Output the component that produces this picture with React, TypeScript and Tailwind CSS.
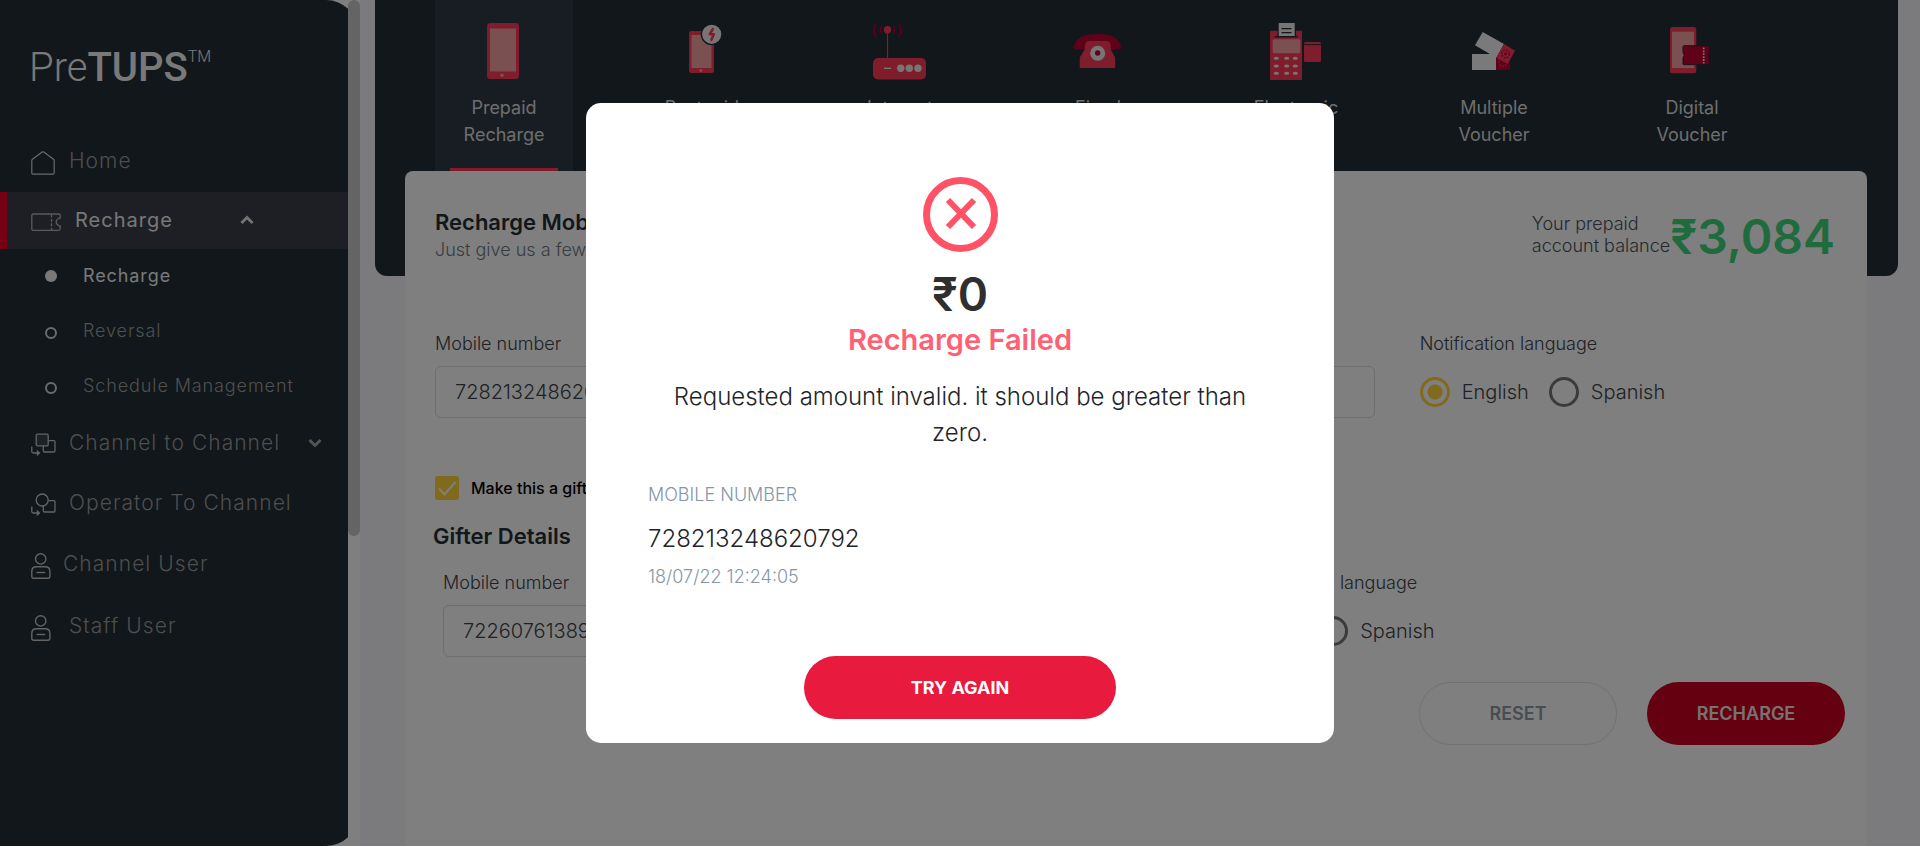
import type { ReactNode } from "react";

const RED = "#ff3a5a";
const DEEP = "#c00032";
const SKIN = "#f4a0a0";
const DARK = "#222e34";
const PALE = "#f0ece8";

function PrepaidIcon() {
  return (
    <svg viewBox="0 0 60 60" className="size-[60px]" aria-hidden="true">
      <rect x="13" y="3" width="32" height="56" rx="3.5" fill={RED} />
      <rect x="16" y="8.5" width="26" height="43" fill={SKIN} />
      <circle cx="28" cy="55.2" r="1.8" fill={SKIN} />
    </svg>
  );
}

function PostpaidIcon() {
  return (
    <svg viewBox="0 0 60 60" className="size-[60px]" aria-hidden="true">
      <rect x="17" y="11" width="25" height="42" rx="2.5" fill={RED} />
      <rect x="19.5" y="15" width="20" height="33" fill={SKIN} />
      <circle cx="28.8" cy="50.5" r="1.5" fill={SKIN} />
      <circle cx="39.7" cy="14.3" r="11" fill={DARK} />
      <circle cx="39.7" cy="14.3" r="9.6" fill={PALE} />
      <path d="M40.8 9.2 37.8 14.2h4l-2.4 5.6" fill="none" stroke={RED} strokeWidth="2.6" strokeLinecap="round" strokeLinejoin="round" />
    </svg>
  );
}

function InternetIcon() {
  return (
    <svg viewBox="0 0 60 60" className="size-[60px]" aria-hidden="true">
      <rect x="3" y="38" width="53" height="21.5" rx="5" fill={RED} />
      <path d="M17.5 10v29" stroke={RED} strokeWidth="1.2" />
      <circle cx="17.5" cy="9.7" r="3.7" fill={RED} />
      <path d="M12 5.5c-2 2.6-2 6 0 8.6M23 5.5c2 2.6 2 6 0 8.6M6.5 3.2c-3.4 4-3.4 10 0 14.2M28.5 3.2c3.4 4 3.4 10 0 14.2" fill="none" stroke={DEEP} strokeWidth="1.4" />
      <path d="M14 48.3h7" stroke={PALE} strokeWidth="1.4" />
      <circle cx="30.7" cy="48.3" r="3.7" fill={PALE} />
      <circle cx="39.3" cy="48.3" r="3.7" fill={PALE} />
      <circle cx="48" cy="48.3" r="3.7" fill={PALE} />
    </svg>
  );
}

function FixedLineIcon() {
  return (
    <svg viewBox="0 0 60 60" className="size-[60px]" aria-hidden="true">
      <path d="M6 28.2C6 18.5 15 14 29.5 14S53 18.5 53 28.2q0 1-1 1H40l-3-7H22l-3 7H7q-1 0-1-1z" fill={DEEP} />
      <path d="M21 21h17q4 0 4.5 4l.5 5 4.2 7.5V47q0 1-1 1H12.7q-1 0-1-1v-9.5L16.5 30l.5-5q.5-4 4-4z" fill={RED} />
      <circle cx="29.7" cy="33.3" r="7.5" fill={PALE} />
      <circle cx="29.7" cy="33" r="2.7" fill={DEEP} />
    </svg>
  );
}

function TerminalIcon() {
  return (
    <svg viewBox="0 0 60 60" className="size-[60px]" aria-hidden="true">
      <rect x="4" y="10.7" width="32" height="49.3" rx="0.8" fill={RED} />
      <path d="M8.7 16.7h23" stroke={DARK} strokeWidth="1.6" />
      <rect x="11.5" y="2" width="18.5" height="14" fill={DARK} />
      <rect x="12.7" y="3" width="16" height="13" fill={PALE} />
      <path d="M15.5 8.7h10M15.5 12.7h10" stroke={DARK} strokeWidth="1.2" />
      <rect x="6.7" y="19.3" width="27.6" height="14" rx="1.5" fill={SKIN} />
      {[38.3, 46, 53.3].map((y) =>
        [10.3, 20.7, 29.3].map((x) => <ellipse key={`${x}-${y}`} cx={x} cy={y} rx="2.6" ry="1.5" fill={PALE} />)
      )}
      <rect x="38" y="22" width="17" height="20" rx="1.5" fill={RED} />
      <path d="M38 24.6h17" stroke={DARK} strokeWidth="1" />
    </svg>
  );
}

function MultiVoucherIcon() {
  return (
    <svg viewBox="0 0 60 60" className="size-[60px]" aria-hidden="true">
      <rect x="8" y="34" width="24" height="16" fill="#f4f4f4" />
      <rect x="32" y="34" width="14" height="16" fill={DEEP} />
      <circle cx="39" cy="42" r="4" fill="none" stroke={RED} strokeWidth="1.4" strokeDasharray="1.2 1.6" />
      <path d="M18.7 12 40 24 32.3 37.7 11 25.3z" fill="#f4f4f4" />
      <path d="M40 24 51 30.7 43.7 44 32.3 37.7z" fill={RED} />
      <circle cx="41.5" cy="34" r="3.8" fill="none" stroke={DEEP} strokeWidth="1.6" strokeDasharray="1.5 1.5" />
      <circle cx="41.5" cy="34" r="1.4" fill={DEEP} />
    </svg>
  );
}

function DigitalVoucherIcon() {
  return (
    <svg viewBox="0 0 60 60" className="size-[60px]" aria-hidden="true">
      <rect x="8" y="7" width="26.3" height="46.3" rx="2.5" fill={RED} />
      <rect x="10" y="11.7" width="22" height="36.3" fill={SKIN} />
      <path
        d="M22 25.7h25.4v7q-2 2.5 0 5v7H22q-1 0-1-1v-6q2.4-2.5 0-5v-6q0-1 1-1z"
        fill={DEEP}
        stroke={DARK}
        strokeWidth="1"
      />
      <path d="M41.7 27.5v16" stroke={PALE} strokeWidth="1.6" strokeDasharray="1.8 1.1" />
    </svg>
  );
}

function HomeIcon() {
  return (
    <svg viewBox="0 0 24 24" className="mt-1 size-6 shrink-0" fill="none" stroke="#d4d4d4" strokeWidth="1.2" strokeLinejoin="round" aria-hidden="true">
      <path d="M.8 9.6Q.8 8.8 1.5 8.3L11.2 1.1q.8-.6 1.6 0l9.7 7.2q.7.5.7 1.3v12.2q0 1.4-1.4 1.4H2.2Q.8 23.2.8 21.8z" />
    </svg>
  );
}

function TicketIcon() {
  return (
    <svg viewBox="0 0 30 18" className="mt-1 h-[18px] w-[30px] shrink-0" fill="none" stroke="#b4b4b4" strokeWidth="1.3" aria-hidden="true">
      <path d="M2 1h26q1.2 0 1.2 1.2V5h-1q-3 1.6-3 4t3 4h1v2.8q0 1.5-1.5 1.5H2q-1.2 0-1.2-1.5v-13Q.8 1 2 1z" />
      <path d="M20.5 1.5v16" strokeDasharray="3 1.4" />
    </svg>
  );
}

function TransferIcon({ round = false }: { round?: boolean }) {
  return (
    <svg viewBox="0 0 25 24" className="mt-1 h-6 w-[25px] shrink-0" fill="none" stroke="#c8c8c8" strokeWidth="1.3" aria-hidden="true">
      {round ? <circle cx="11.2" cy="7" r="6" /> : <rect x="5.2" y="1.2" width="12" height="11.6" rx="1.3" fill="#38444a" />}
      <path d="M17.2 7.6h5.6q1.2 0 1.2 1.2v9q0 1.2-1.2 1.2H13.5q-1.2 0-1.2-1.2v-5" />
      <path d="M.8 13.5v5q0 1.5 1.5 1.5h4" />
      <path d="M5.8 16.8v6.4l3.6-3.2z" fill="#c8c8c8" stroke="none" />
    </svg>
  );
}

function UserIcon() {
  return (
    <svg viewBox="0 0 20 26" className="mt-1 h-[26px] w-5 shrink-0" fill="none" stroke="#c8c8c8" strokeWidth="1.4" aria-hidden="true">
      <circle cx="9.7" cy="5.9" r="5.2" />
      <path d="M.8 18.5q0-4.7 4.7-4.7h8.7q4.7 0 4.7 4.7v4.7q0 2-2 2H2.8q-2 0-2-2z" />
      <path d="M5.5 19.5h8.7" />
    </svg>
  );
}

function Chevron({ up = false, color }: { up?: boolean; color: string }) {
  return (
    <svg viewBox="0 0 14 10" className="h-2.5 w-3.5" fill="none" stroke={color} strokeWidth="3" aria-hidden="true">
      <path d={up ? "M1.5 8 7 2.5 12.5 8" : "M1.5 2 7 7.5 12.5 2"} />
    </svg>
  );
}

function SubItem({ label, active = false }: { label: string; active?: boolean }) {
  return (
    <li>
      <a
        href="#"
        className={
          active
            ? "flex h-[55px] items-center gap-[26px] pl-[45px] text-[18px] tracking-wider text-[#f2f2f2]"
            : "flex h-[55px] items-center gap-[26px] pl-[45px] text-[18px] font-light tracking-wider text-[#a0a0a0]"
        }
      >
        <span className={active ? "size-3 rounded-full bg-[#f2f2f2]" : "mt-1 size-3 rounded-full border-2 border-[#d8d8d8]"} />
        {label}
      </a>
    </li>
  );
}

const tabs: { lines: [string, string]; icon: ReactNode }[] = [
  { lines: ["Prepaid", "Recharge"], icon: <PrepaidIcon /> },
  { lines: ["Postpaid", "Recharge"], icon: <PostpaidIcon /> },
  { lines: ["Internet", "Recharge"], icon: <InternetIcon /> },
  { lines: ["Fixed", "Line"], icon: <FixedLineIcon /> },
  { lines: ["Electronic", "Voucher"], icon: <TerminalIcon /> },
  { lines: ["Multiple", "Voucher"], icon: <MultiVoucherIcon /> },
  { lines: ["Digital", "Voucher"], icon: <DigitalVoucherIcon /> },
];

const inputStyle =
  "h-[52px] w-full rounded-md border border-[#dcdcdc] bg-white px-[19px] text-[20px] font-light text-[#3c444c]";

function Field({ id, label, value }: { id: string; label: string; value: string }) {
  return (
    <div className="flex min-w-0 flex-col gap-2">
      <label htmlFor={id} className="text-[18px] leading-7 font-light text-[#3c444c]">
        {label}
      </label>
      <input id={id} defaultValue={value} className={inputStyle} />
    </div>
  );
}

function LanguageField({ name, label }: { name: string; label: string }) {
  return (
    <fieldset className="min-w-0">
      <legend className="text-[18px] leading-7 font-light text-[#3c444c]">{label}</legend>
      <div className="mt-2 flex h-[52px] items-center gap-5">
        {["English", "Spanish"].map((lang) => (
          <label key={lang} className="flex items-center gap-3 text-[20px] font-light text-[#3c444c]">
            <input
              type="radio"
              name={name}
              defaultChecked={lang === "English"}
              className="size-[30px] appearance-none rounded-full border-[3px] border-[#777777] checked:border-[#ffd43b] checked:bg-[radial-gradient(circle,#ffd43b_7px,transparent_8px)]"
            />
            {lang}
          </label>
        ))}
      </div>
    </fieldset>
  );
}

function Sidebar() {
  const item = "flex items-center text-[21px] font-light tracking-wider text-[#9c9c9c]";
  return (
    <aside className="flex w-[360px] shrink-0 bg-white">
      <div className="min-w-0 flex-1 overflow-hidden">
        <div className="-mr-[10px] h-full rounded-r-[32px] bg-[#222e34]">
          <div className="flex h-[129px] items-start pt-[45px] pl-[29px] font-['Roboto',sans-serif] leading-[46px] text-[#f2f2f2]">
            <span className="text-[40px] font-light">
              Pre<span className="font-medium">TUPS</span>
            </span>
            <span className="text-[16px] leading-6 font-light">TM</span>
          </div>
          <nav className="mr-[10px]">
            <ul>
              <li>
                <a href="#" className={`${item} h-[63px] gap-[14px] pl-[31px]`}>
                  <HomeIcon />
                  Home
                </a>
              </li>
              <li>
                <button
                  type="button"
                  aria-expanded="true"
                  className="flex h-[57px] w-full items-center gap-[14px] border-l-[7px] border-[#ea0028] bg-[#3a3e48] pb-0.5 pl-6 text-[20px] tracking-wider text-[#eeeeee]"
                >
                  <TicketIcon />
                  <span className="w-[151px] text-left">Recharge</span>
                  <Chevron up color="#e4e4e4" />
                </button>
                <ul className="-mt-px">
                  <SubItem label="Recharge" active />
                  <SubItem label="Reversal" />
                  <SubItem label="Schedule Management" />
                </ul>
              </li>
              <li>
                <button type="button" aria-expanded="false" className={`${item} h-[60px] w-full gap-[13px] pl-[31px]`}>
                  <TransferIcon />
                  <span className="w-[226px] text-left">Channel to Channel</span>
                  <Chevron color="#a8a8a8" />
                </button>
              </li>
              <li>
                <a href="#" className={`${item} h-[60px] gap-[13px] pl-[31px]`}>
                  <TransferIcon round />
                  Operator To Channel
                </a>
              </li>
              <li>
                <a href="#" className={`${item} h-[62px] gap-3 pl-[31px]`}>
                  <UserIcon />
                  Channel User
                </a>
              </li>
              <li>
                <a href="#" className={`${item} h-[62px] gap-[18px] pl-[31px]`}>
                  <UserIcon />
                  Staff User
                </a>
              </li>
            </ul>
          </nav>
        </div>
      </div>
      <div className="w-3">
        <div className="h-[536px] rounded-md bg-[#c8c8c8]" />
      </div>
    </aside>
  );
}

function FailureDialog() {
  return (
    <div className="fixed inset-0 flex items-center justify-center bg-black/50">
      <div role="dialog" aria-modal="true" aria-labelledby="dialog-title" className="flex w-[748px] flex-col rounded-[15px] bg-white px-[62px] pt-[74px] pb-6 text-[#212529]">
        <svg viewBox="0 0 75 75" className="size-[75px] self-center" fill="none" stroke="#ff5266" aria-hidden="true">
          <circle cx="37.5" cy="37.5" r="34" strokeWidth="7" />
          <path d="M25 23 51 50M51 23 25 50" strokeWidth="6" />
        </svg>
        <p className="mt-3.5 text-center text-[46px] leading-[56px] font-semibold text-[#2f2f2f]">₹0</p>
        <h2 id="dialog-title" className="text-center text-[29px] leading-9 font-semibold text-[#ff6072]">
          Recharge Failed
        </h2>
        <p className="mt-[21px] text-center text-[24px] leading-9 font-light">
          Requested amount invalid. it should be greater than zero.
        </p>
        <p className="mt-[30px] text-[18px] leading-7 font-light text-[#8696a8]">MOBILE NUMBER</p>
        <p className="mt-3 text-[24px] leading-9 font-light">728213248620792</p>
        <p className="mt-1.5 text-[18px] leading-7 font-light text-[#8696a8]">18/07/22 12:24:05</p>
        <button type="button" className="mt-[65px] h-[63px] w-[312px] self-center rounded-full bg-[#e81a3e] text-[18px] font-bold text-white">
          TRY AGAIN
        </button>
      </div>
    </div>
  );
}

export default function App() {
  return (
    <div className="flex min-h-screen bg-[#f6f6fa] font-['Inter',sans-serif]">
      <Sidebar />
      <main className="flex min-w-0 flex-1 flex-col pr-[22px] pl-[15px]">
        <div role="tablist" className="flex gap-[60px] rounded-b-xl bg-[#222e34] pb-[105px] pl-[60px]">
          {tabs.map(({ lines, icon }, i) => (
            <button
              key={lines.join(" ")}
              type="button"
              role="tab"
              aria-selected={i === 0}
              className={
                i === 0
                  ? "flex h-[171px] w-[138px] flex-col items-center bg-[#303a46] px-[15px] pt-5"
                  : "flex h-[171px] w-[138px] flex-col items-center px-[15px] pt-5"
              }
            >
              {icon}
              <span className="mt-3.5 flex flex-1 flex-col text-center text-[18px] leading-[27px] text-[#dcdcdc]">
                <span>{lines[0]}</span>
                <span>{lines[1]}</span>
              </span>
              {i === 0 && <span className="h-[3px] w-full bg-[#ff3a5a]" />}
            </button>
          ))}
        </div>

        <form className="mr-[31px] -mt-[105px] ml-[30px] flex-1 rounded-t-lg bg-white pt-[33px] pl-[30px]">
          <div className="flex items-start justify-between pr-8">
            <div className="pt-1">
              <h1 className="text-[22px] leading-7 font-semibold text-[#222e34]">Recharge Mobile</h1>
              <p className="text-[18px] leading-7 font-light text-[#6f7a84]">Just give us a few details</p>
            </div>
            <div className="flex items-start">
              <p className="pt-[9px] text-[18px] leading-[22px] font-light text-[#4a525a]">
                Your prepaid
                <br />
                account balance
              </p>
              <p className="text-[48px] leading-[66px] font-semibold text-[#40d67c]">₹3,084</p>
            </div>
          </div>

          <div className="mt-[60px] grid grid-cols-3 items-end gap-[45px]">
            <Field id="mobile" label="Mobile number" value="728213248620792" />
            <input aria-label="Amount" className={inputStyle} />
            <LanguageField name="language" label="Notification language" />
          </div>

          <div className="mt-[58px] flex h-6 items-center gap-3">
            <span className="grid size-6">
              <input id="gift" type="checkbox" defaultChecked className="col-start-1 row-start-1 size-6 appearance-none rounded-xs bg-[#ffd43b]" />
              <svg viewBox="0 0 24 24" className="pointer-events-none col-start-1 row-start-1 size-6" fill="none" stroke="#fff" strokeWidth="2" aria-hidden="true">
                <path d="M4 12.5 9.5 18.5 20.5 6" />
              </svg>
            </span>
            <label htmlFor="gift" className="text-[16px] font-medium text-black">
              Make this a gift recharge
            </label>
          </div>

          <h2 className="mt-[22px] -ml-0.5 text-[22px] leading-7 font-semibold text-[#222e34]">Gifter Details</h2>
          <div className="mt-[19px] ml-2 grid w-3/4 grid-cols-3 items-end gap-[45px]">
            <Field id="gifter-mobile" label="Mobile number" value="722607613892" />
            <input aria-label="Gifter name" className={inputStyle} />
            <LanguageField name="gifter-language" label="Gifter Notification language" />
          </div>

          <div className="mt-[25px] flex justify-end gap-[30px] pr-[22px]">
            <button type="reset" className="h-[63px] w-[198px] rounded-full border border-[#e2e2e2] text-[18px] font-semibold text-[#8f9ba6]">
              RESET
            </button>
            <button type="button" className="h-[63px] w-[198px] rounded-full bg-[#c80020] text-[18px] font-semibold text-[#f0e4e6]">
              RECHARGE
            </button>
          </div>
        </form>
      </main>
      <FailureDialog />
    </div>
  );
}
